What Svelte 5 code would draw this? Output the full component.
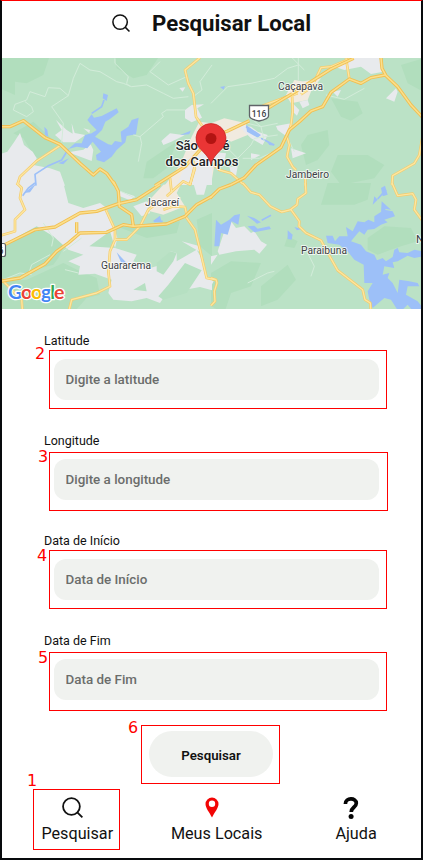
<script>
  const fields = [
    { label: 'Latitude', placeholder: 'Digite a latitude' },
    { label: 'Longitude', placeholder: 'Digite a longitude' },
    { label: 'Data de Início', placeholder: 'Data de Início' },
    { label: 'Data de Fim', placeholder: 'Data de Fim' }
  ];

  // Map tiles, each drawn in its own local coordinates
  const tiles = [
    {
      x: 0, y: 165,
      park: 'M0 0H150L130 60 80 85 45 80 45 120 0 100ZM345 8H475L440 60 400 70 350 40ZM40 235L100 200 175 270 120 315 100 300 70 250ZM440 320L500 280 530 260 500 340 460 370 430 370Z',
      sand: 'M636 205L598 200 575 245 540 330 495 390H636Z',
      urban: 'M0 298L22 290 42 262 60 234 72 270 98 290 110 310 100 330 150 340 180 350 195 392H0ZM168 195L200 225 218 236 215 205 224 234 256 240 225 262 190 262 165 240 185 225ZM205 292L250 284 272 268 280 285 275 318 235 303ZM538 99L556 97 548 110ZM555 165L575 150 612 148 592 160 606 188 575 202 555 190ZM484 258L510 235 554 241 514 260 490 270ZM250 220L270 225 268 235ZM565 310L636 290V390H530Z',
      water: 'M310 115L324 120 320 138 308 130ZM262 195L275 178 282 188 305 183 350 160 356 172 330 192 316 200 306 225 285 245 325 268 335 270 345 258 365 262 362 230 385 215 395 195 416 188 408 238 380 243 376 262 350 285 335 305 312 322 290 315 288 300 303 290 278 260 262 280 230 275 205 282 225 265 245 265 255 240 275 235 290 225 270 205ZM133 215L142 225 145 245 135 240ZM540 240L572 227 568 238ZM175 325L207 310 190 328Z',
      stream: 'M312 135L305 155 275 175M205 282L185 315 145 332 105 358 108 392M305 193L345 172',
      minor: 'M205 122L220 70 240 25 270 45 300 50 350 80 370 85 395 95 440 90 490 115 520 130 565 125M345 10V25L385 65 380 85 390 95M205 122L180 100 145 98 135 125 90 110 80 135 45 148 40 165 80 185 100 170 95 155 75 140M205 122L155 155 190 205 185 262M636 30L600 80 606 105 580 125M480 20L450 50 505 90 560 65M555 165L500 165 485 175 490 185 420 245 400 240M420 245L425 265 415 320',
      minorRoad: 'M180 272L110 318 60 365 52 390M600 8L555 45 565 85 580 115 588 185 606 212M570 390L585 330 575 310',
      road: 'M0 215H30L70 197 135 248 180 268 240 325 280 360 300 342 320 355 345 390M465 392L555 335 600 285 640 245'
    },
    {
      x: 633, y: 165,
      park: 'M360 130L440 140 455 175 420 197 390 185ZM290 240L350 225 355 270 320 315 285 330 270 270ZM380 300L470 300 520 330 490 370 390 390 360 350ZM570 30L636 10V110L590 85Z',
      sand: 'M0 205L40 190 105 205 110 240 60 260 30 240 20 270 0 390ZM225 120L250 75 310 85 290 135 240 145ZM270 80L330 70 310 95Z',
      urban: 'M425 8H505L517 50 480 57 450 35 400 45 370 35ZM365 110L390 105 380 125ZM525 130L555 100 560 110 550 140ZM195 213L240 205 228 245 200 225ZM80 210L120 215 140 230 170 240 155 270 120 250ZM240 280L285 295 245 310ZM120 295L148 300 120 315ZM245 145L265 165 258 182 245 170ZM265 140L290 135 295 150 275 160ZM0 290L45 295 40 320 0 335ZM55 335L80 335 75 362 60 355Z',
      water: 'M27 96L42 93 38 104ZM105 210L150 240 140 248 108 230ZM165 255L190 272 175 270Z',
      stream: 'M105 215L135 236M150 250L190 270',
      minor: 'M0 145L50 95 120 85 190 70 230 40 262 30M262 5V75M240 5L280 45M345 120L400 133 460 100M110 205L150 215 200 205M50 280L80 310 120 270 130 250 200 240M95 310L145 310 200 285M230 250L250 290M120 350L140 320M120 190L150 215 160 260',
      minorRoad: 'M155 152L215 130 260 115M245 95L290 105 270 118M405 10L415 72M243 115L245 170 240 210 228 245 235 270 228 305 245 335 255 345M283 365V392M636 235L625 300 610 325 545 362 543 390M310 80L330 38 360 35 415 12M0 322L25 345 60 355 95 386M280 95L320 88',
      road: 'M-6 248L50 228 115 197M170 160L245 115 300 80 360 42 428 10M60 389L100 368 135 330 210 277 235 225 265 200 300 168 335 155 360 112 415 72 450 85 480 68 522 60M510 8L513 40 525 62 560 95 600 150 636 188'
    },
    {
      x: 0, y: 549,
      park: 'M0 190L110 130 165 155 200 175 175 225 160 245 100 262 0 290ZM0 295L80 290 190 240 240 265 290 285 300 335 260 345 220 390H0ZM350 130L540 115 530 150 440 165ZM590 110L636 90V220L600 190Z',
      sand: 'M440 60L490 5 545 0 530 30 555 70 490 95 450 85Z',
      urban: 'M0 0H190L205 60 250 75 300 60 320 75 345 140 352 165 345 195 410 215 400 235 450 255 485 245 512 205 530 210 530 235 590 200 612 240 620 285 636 290V322L600 312 555 320 490 345 480 360 440 345 395 355 340 350 325 330 335 290 285 272 235 275 240 250 205 235 250 215 205 200 160 160 110 130 0 190ZM360 25L405 40 390 52 360 40ZM580 0H622L612 35 590 35ZM400 70L440 55 450 90 425 100ZM545 175L600 190 605 210Z',
      greens: 'M268 190L330 145 345 195ZM470 240L512 205 530 210 520 235 490 275 470 265ZM400 320L435 300 440 325ZM505 305L555 240 605 262 560 330 490 350 475 340Z',
      water: 'M350 208L380 240 365 242ZM458 115L480 98 485 118ZM72 30L110 0 90 28Z',
      stream: 'M68 38L85 15 105 0M462 115H488',
      minor: 'M130 120L160 165 155 190M85 275L95 245 150 215M10 290L60 270 95 275M190 205L245 165M195 260L235 270M362 25L405 45',
      minorRoad: 'M50 0L65 15 60 45 75 80 45 110 45 145 0 158M315 75L345 140 345 170 380 170 420 130 445 80 465 65M345 170L330 205 325 265 330 310 290 330 215 350 205 390M555 98L585 140 600 200 620 285 645 290M490 80L520 70 555 72 560 95M0 285L65 350 68 390M500 40L550 -5 570 5 585 -45M510 -15L515 30',
      road: 'M0 192L105 140 165 132 240 90 290 85 355 62 410 50 480 5M340 -5L355 25 358 70 395 95 400 130M0 295L60 285 135 243 170 205 205 180 240 150 320 148 370 125 400 130 500 123 555 100 590 65 636 40M230 150V118'
    },
    {
      x: 633, y: 549,
      park: 'M350 0H480L470 50 430 65 330 65ZM470 165L520 130 600 135 620 175 570 190 540 200 500 215 470 200ZM0 270L60 235 150 240 120 310 60 330 40 390 0 370ZM150 310L230 245 255 290 200 350 150 370ZM230 160L260 175 250 195 220 190Z',
      sand: '',
      urban: 'M20 205L40 145 60 115 75 135 100 130 120 150 130 145 150 175 168 185 145 212 130 200 75 205 25 215ZM0 220L20 215 0 245ZM0 290L8 295 0 310Z',
      water: 'M10 190L15 110 30 125 55 110 70 97 87 93 82 125 62 115 50 155 30 150 25 190ZM108 98L130 105 150 118 138 122ZM110 130L130 128 140 137 175 130 180 138 130 148ZM230 142L245 155 242 170 230 168ZM250 132L272 138 258 142ZM345 158H365L372 175 385 160 410 160 405 132 425 145 440 115 460 118 472 110 490 118 490 100 520 80 545 85 552 100 520 110 530 118 510 125 490 138 470 140 460 155 445 145 420 175 450 185 465 205 490 215 498 232 515 225 525 235 545 222 550 200 560 195 565 208 590 210 610 200 636 205V220L610 225 590 218 560 235 545 238 550 255 520 250 515 275 535 270 530 285 545 300 560 330 565 290 595 295 620 300 625 310 590 310 585 335 620 355 636 375V390H610L590 365 565 390 540 350 520 345 485 375 475 350 470 325 485 300 460 300 458 245 430 230 412 208 385 185 350 180ZM485 65L490 40 500 50ZM510 15L522 8 530 35 515 40ZM512 55L540 80 525 78 510 90Z',
      stream: 'M500 48L525 20M152 112L180 97',
      minor: 'M110 300L170 270 190 265M290 210L310 250 300 280',
      minorRoad: 'M283 0L285 30 260 48 258 65 238 80M95 0L120 28 145 35 178 70 212 87 240 80M240 80L265 115 264 130 285 150 330 172 345 200 380 262 455 320 462 350 478 360 480 390M543 0L560 38 605 32 615 50 610 80 636 115M0 285L15 290 18 300 10 325 12 355 0 368',
      road: 'M-3 45L25 18 60 5'
    }
  ];

  const layers = ['park', 'sand', 'urban', 'greens', 'water', 'stream', 'minor', 'minorRoad casing', 'minorRoad', 'road casing', 'road'];

  const places = [
    { name: 'Caçapava', x: 278, y: 90, w: 45 },
    { name: 'Jambeiro', x: 286, y: 177.5, w: 43 },
    { name: 'Jacareí', x: 145, y: 205.5, w: 34 },
    { name: 'Guararema', x: 101, y: 269, w: 50 },
    { name: 'Paraibuna', x: 301, y: 254, w: 46 },
    { name: 'N', x: 416, y: 243, w: 8 }
  ];

  const logo = [
    ['G', '#4285f4'], ['o', '#ea4335'], ['o', '#fbbc05'],
    ['g', '#4285f4'], ['l', '#34a853'], ['e', '#ea4335']
  ];

  const marks = [
    { n: 2, x: 49, y: 350, w: 338, h: 59, tx: 35, ty: 345 },
    { n: 3, x: 49, y: 452, w: 339, h: 59, tx: 38, ty: 448 },
    { n: 4, x: 49, y: 550, w: 338, h: 59, tx: 37, ty: 547 },
    { n: 5, x: 49, y: 652, w: 338, h: 59, tx: 38, ty: 649 },
    { n: 6, x: 141, y: 725, w: 139, h: 59, tx: 128, ty: 719 },
    { n: 1, x: 33, y: 789, w: 87, h: 61, tx: 27, ty: 772 }
  ];
</script>

{#snippet searchIcon(size)}
  <svg width={size} height={size} viewBox="0 0 20 20" fill="none" stroke="#111" stroke-width="1.7">
    <circle cx="9" cy="9" r="8" />
    <path d="M14.6 14.6L19.4 19.4" />
  </svg>
{/snippet}

<div class="screen">
  <header>
    {@render searchIcon(18)}
    <h1>Pesquisar Local</h1>
  </header>

  <svg class="map" width="419" height="251" viewBox="2 58 419 251">
    <rect x="2" y="58" width="419" height="251" fill="#bbe2c6" />
    <g transform="scale(.33333)">
      {#each layers as layer}
        {#each tiles as t}
          <path class={layer} d={t[layer.split(' ')[0]] || ''} transform="translate({t.x} {t.y})" />
        {/each}
      {/each}
    </g>
    <g>
      <path d="M249.500 105.500H268.500V116Q268.500 119 259 121Q249.500 119 249.500 116Z" fill="#fff" stroke="#5f6368" stroke-width="1.3" />
      <text class="shield" x="259" y="116.500">116</text>
      <rect x="-8" y="243.500" width="13.500" height="13" rx="2" fill="#fff" stroke="#5f6368" stroke-width="1.2" />
      <text class="shield" x="1" y="254">6</text>
    </g>
    {#each places as p}
      <text class="place" x={p.x} y={p.y} textLength={p.w} lengthAdjust="spacingAndGlyphs">{p.name}</text>
    {/each}
    <text class="place city" x="202.500" y="150">São José</text>
    <text class="place city" x="202" y="165.500">dos Campos</text>
    <path d="M211 164.500C209.500 157 203 152 199 147.500A15 15 0 1 1 223 147.500C219 152 212.500 157 211 164.500Z" fill="#ea3535" stroke="#c5221f" stroke-width=".7" />
    <circle cx="211" cy="138.500" r="5.500" fill="#b31412" />
    <text class="logo" x="8" y="298.500" textLength="56.500">{#each logo as [ch, color]}<tspan fill={color}>{ch}</tspan>{/each}</text>
  </svg>

  <form onsubmit={(e) => e.preventDefault()}>
    {#each fields as f}
      <label>
        <span>{f.label}</span>
        <input type="text" placeholder={f.placeholder} />
      </label>
    {/each}
    <button>Pesquisar</button>
  </form>

  <nav>
    <div class="item">
      <i>{@render searchIcon(21)}</i>
      <span>Pesquisar</span>
    </div>
    <div class="item">
      <i>
        <svg width="14" height="21" viewBox="0 0 14 21">
          <path fill="#f20505" fill-rule="evenodd" d="M7 .5A6.500 6.500 0 0 1 13.500 7C13.500 11 9.500 15.500 7 20.500C4.500 15.500 .5 11 .5 7A6.500 6.500 0 0 1 7 .5ZM7 3.500A3.200 3.200 0 1 0 7 9.900A3.200 3.200 0 1 0 7 3.500Z" />
        </svg>
      </i>
      <span>Meus Locais</span>
    </div>
    <div class="item">
      <i>
        <svg width="16" height="23" viewBox="0 0 16 23">
          <path fill="none" stroke="#050505" stroke-width="3.700" d="M2.400 7C2.400 .4 13.300 .4 13.300 6.200C13.300 10.300 8.200 10.300 8.200 15" />
          <circle cx="8.100" cy="19.500" r="2.500" fill="#050505" />
        </svg>
      </i>
      <span>Ajuda</span>
    </div>
  </nav>

  {#each marks as m}
    <div class="mark" style="left:{m.x}px;top:{m.y}px;width:{m.w}px;height:{m.h}px"></div>
    <b class="num" style="left:{m.tx}px;top:{m.ty}px">{m.n}</b>
  {/each}
</div>

<style>
  .screen {
    position: relative;
    box-sizing: border-box;
    width: 423px;
    height: 860px;
    display: flex;
    flex-direction: column;
    border: 2px solid #080a0d;
    border-top: 1px solid #f00;
    background: #fff;
    overflow: hidden;
    font-family: Roboto, 'Liberation Sans', sans-serif;
    color: #111;
  }
  header {
    height: 57px;
    flex: none;
    box-sizing: border-box;
    display: flex;
    align-items: flex-start;
    padding: 13px 0 0 110px;
    gap: 22px;
  }
  h1 {
    margin: -5px 0 0;
    font-size: 22.2px;
    line-height: 28px;
    font-weight: 700;
    white-space: nowrap;
  }
  .map { display: block; flex: none; }
  .park { fill: #b1debd; }
  .sand { fill: #f1eadf; }
  .urban { fill: #e8eaed; }
  .greens { fill: #b6e0c2; }
  .water { fill: #9dc0f8; }
  .stream { fill: none; stroke: #9dc0f8; stroke-width: 5; }
  .minor { fill: none; stroke: #d3ecda; stroke-width: 3; }
  .minorRoad, .road { fill: none; stroke-linejoin: round; }
  .minorRoad { stroke: #fde6a1; stroke-width: 4; }
  .minorRoad.casing { stroke: #f4cc6c; stroke-width: 8; }
  .road { stroke: #fbdf8c; stroke-width: 4.5; }
  .road.casing { stroke: #f0bf52; stroke-width: 10; }
  .place {
    font-size: 11.5px;
    fill: #3c4043;
    paint-order: stroke;
    stroke: #fff;
    stroke-opacity: .75;
    stroke-width: 2px;
    stroke-linejoin: round;
  }
  .city { font-size: 13px; font-weight: 500; fill: #202124; text-anchor: middle; }
  .shield { font-size: 8.5px; font-weight: 500; fill: #3c4043; text-anchor: middle; }
  .logo {
    font: 700 19.5px Lato, sans-serif;
    paint-order: stroke;
    stroke: #fff;
    stroke-width: 2.5px;
    stroke-linejoin: round;
  }
  form {
    display: flex;
    flex-direction: column;
    height: 473px;
    flex: none;
    padding: 22px 42px 0;
    box-sizing: border-box;
  }
  label { display: block; height: 100px; flex: none; font-size: 12.5px; }
  label span { display: block; height: 28px; line-height: 19px; }
  input {
    display: block;
    box-sizing: border-box;
    width: 325px;
    height: 41px;
    margin-left: 10px;
    padding: 0 12px 0 11.5px;
    border: 0;
    border-radius: 12px;
    background: #f0f2ef;
    font: 500 13.4px Roboto, sans-serif;
    color: #111;
  }
  input::placeholder { color: #6b6d6b; opacity: 1; }
  button {
    flex: none;
    width: 124px;
    height: 46px;
    margin-left: 105px;
    padding: 2px 0 0;
    border: 0;
    border-radius: 23px;
    background: #f0f2ef;
    font: 600 13.3px Roboto, sans-serif;
    color: #111;
  }
  nav { display: flex; padding: 15px 0 0 5.6px; }
  .item {
    flex: none;
    width: 139.4px;
    display: flex;
    flex-direction: column;
    align-items: center;
    font-size: 16.2px;
    line-height: 20px;
    white-space: nowrap;
  }
  .item i { height: 27px; margin-right: 10px; display: flex; align-items: flex-start; }
  .mark { position: absolute; box-sizing: border-box; margin: -1px 0 0 -2px; border: 1px solid #f00; }
  .num { position: absolute; margin: -1px 0 0 -2px; font: 400 16px/18px 'DejaVu Sans', sans-serif; color: #f00; }
</style>
